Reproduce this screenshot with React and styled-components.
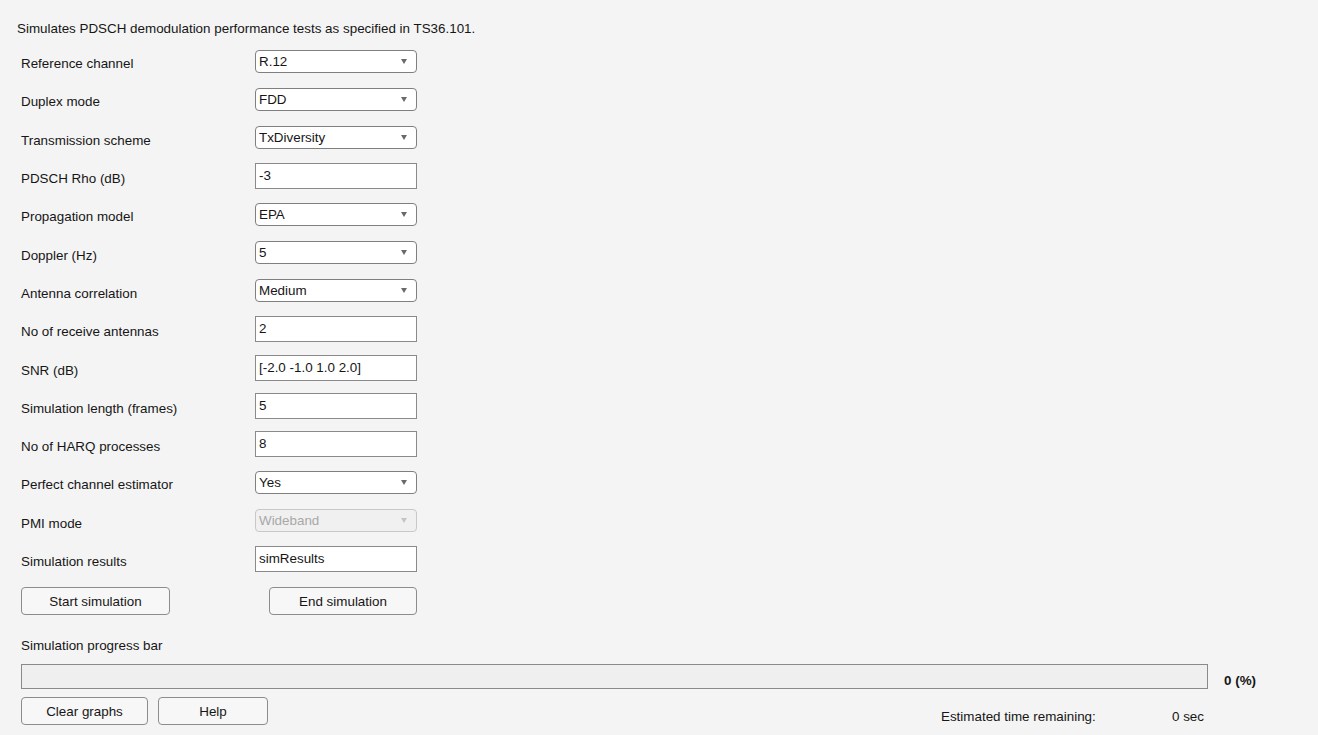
import React from "react";
import styled, { createGlobalStyle } from "styled-components";

const GlobalStyle = createGlobalStyle`
  html, body {
    margin: 0;
    padding: 0;
    background: #f4f4f4;
  }
  body {
    font-family: "Liberation Sans", Arial, sans-serif;
    font-size: 13.4px;
    color: #161616;
  }
`;

const Page = styled.div`
  width: 1318px;
  height: 735px;
  box-sizing: border-box;
  padding: 21px 0 0 21px;
  overflow: hidden;
`;

const Description = styled.div`
  margin-left: -4px;
  line-height: 16px;
  margin-bottom: 5px;
`;

const Form = styled.div`
  display: grid;
  grid-template-columns: 234px 162px;
  grid-auto-rows: 38.3px;
  align-items: center;
`;

const Label = styled.div`
  padding-top: 6px;
  line-height: 16px;
`;

const Select = styled.div`
  position: relative;
  height: 23px;
  box-sizing: border-box;
  border: 1px solid ${(p) => (p.disabled ? "#c8c8c8" : "#7f7f7f")};
  border-radius: 4px;
  background: ${(p) => (p.disabled ? "#f0f0f0" : "#ffffff")};
  color: ${(p) => (p.disabled ? "#a8a8a8" : "#161616")};
  padding: 0 3px;
  line-height: 21px;

  &::after {
    content: "";
    position: absolute;
    right: 9px;
    top: 8px;
    border-left: 3px solid transparent;
    border-right: 3px solid transparent;
    border-top: 5px solid ${(p) => (p.disabled ? "#c4c4c4" : "#6a6a6a")};
  }
`;

const Input = styled.div`
  height: 26px;
  box-sizing: border-box;
  border: 1px solid #8a8a8a;
  background: #ffffff;
  padding: 0 3px;
  line-height: 24px;
`;

const ButtonRow = styled.div`
  display: flex;
  justify-content: space-between;
  width: 396px;
  margin-top: 9px;
`;

const Button = styled.button`
  width: ${(p) => p.width}px;
  height: 28px;
  box-sizing: border-box;
  border: 1px solid #8c8c8c;
  border-radius: 4px;
  background: #f7f7f7;
  font-family: "Liberation Sans", Arial, sans-serif;
  font-size: 13.4px;
  color: #161616;
  padding: 0;
  margin: 0;
`;

const ProgressLabel = styled.div`
  margin-top: 23px;
  line-height: 16px;
`;

const ProgressRow = styled.div`
  display: flex;
  align-items: center;
  margin-top: 10px;
`;

const ProgressBar = styled.div`
  width: 1187px;
  height: 25px;
  box-sizing: border-box;
  border: 1px solid #8a8a8a;
  background: #efefef;
`;

const Percent = styled.div`
  margin-left: 16px;
  padding-top: 7px;
  font-weight: bold;
`;

const BottomRow = styled.div`
  display: flex;
  align-items: center;
  width: 1187px;
  margin-top: 8px;
`;

const ButtonGroup = styled.div`
  display: flex;
  gap: 10px;
`;

const Status = styled.div`
  display: flex;
  margin-left: auto;
  padding: 10px 4px 0 0;
`;

const StatusLabel = styled.div`
  width: 231px;
`;

const fields = [
  { label: "Reference channel", type: "select", value: "R.12" },
  { label: "Duplex mode", type: "select", value: "FDD" },
  { label: "Transmission scheme", type: "select", value: "TxDiversity" },
  { label: "PDSCH Rho (dB)", type: "input", value: "-3" },
  { label: "Propagation model", type: "select", value: "EPA" },
  { label: "Doppler (Hz)", type: "select", value: "5" },
  { label: "Antenna correlation", type: "select", value: "Medium" },
  { label: "No of receive antennas", type: "input", value: "2" },
  { label: "SNR (dB)", type: "input", value: "[-2.0 -1.0 1.0 2.0]" },
  { label: "Simulation length (frames)", type: "input", value: "5" },
  { label: "No of HARQ processes", type: "input", value: "8" },
  { label: "Perfect channel estimator", type: "select", value: "Yes" },
  { label: "PMI mode", type: "select", value: "Wideband", disabled: true },
  { label: "Simulation results", type: "input", value: "simResults" },
];

export default function App() {
  return (
    <Page>
      <GlobalStyle />
      <Description>
        Simulates PDSCH demodulation performance tests as specified in TS36.101.
      </Description>
      <Form>
        {fields.map((f) => (
          <React.Fragment key={f.label}>
            <Label>{f.label}</Label>
            {f.type === "select" ? (
              <Select disabled={f.disabled}>{f.value}</Select>
            ) : (
              <Input>{f.value}</Input>
            )}
          </React.Fragment>
        ))}
      </Form>
      <ButtonRow>
        <Button width={149}>Start simulation</Button>
        <Button width={148}>End simulation</Button>
      </ButtonRow>
      <ProgressLabel>Simulation progress bar</ProgressLabel>
      <ProgressRow>
        <ProgressBar />
        <Percent>0 (%)</Percent>
      </ProgressRow>
      <BottomRow>
        <ButtonGroup>
          <Button width={127}>Clear graphs</Button>
          <Button width={110}>Help</Button>
        </ButtonGroup>
        <Status>
          <StatusLabel>Estimated time remaining:</StatusLabel>
          <div>0 sec</div>
        </Status>
      </BottomRow>
    </Page>
  );
}
